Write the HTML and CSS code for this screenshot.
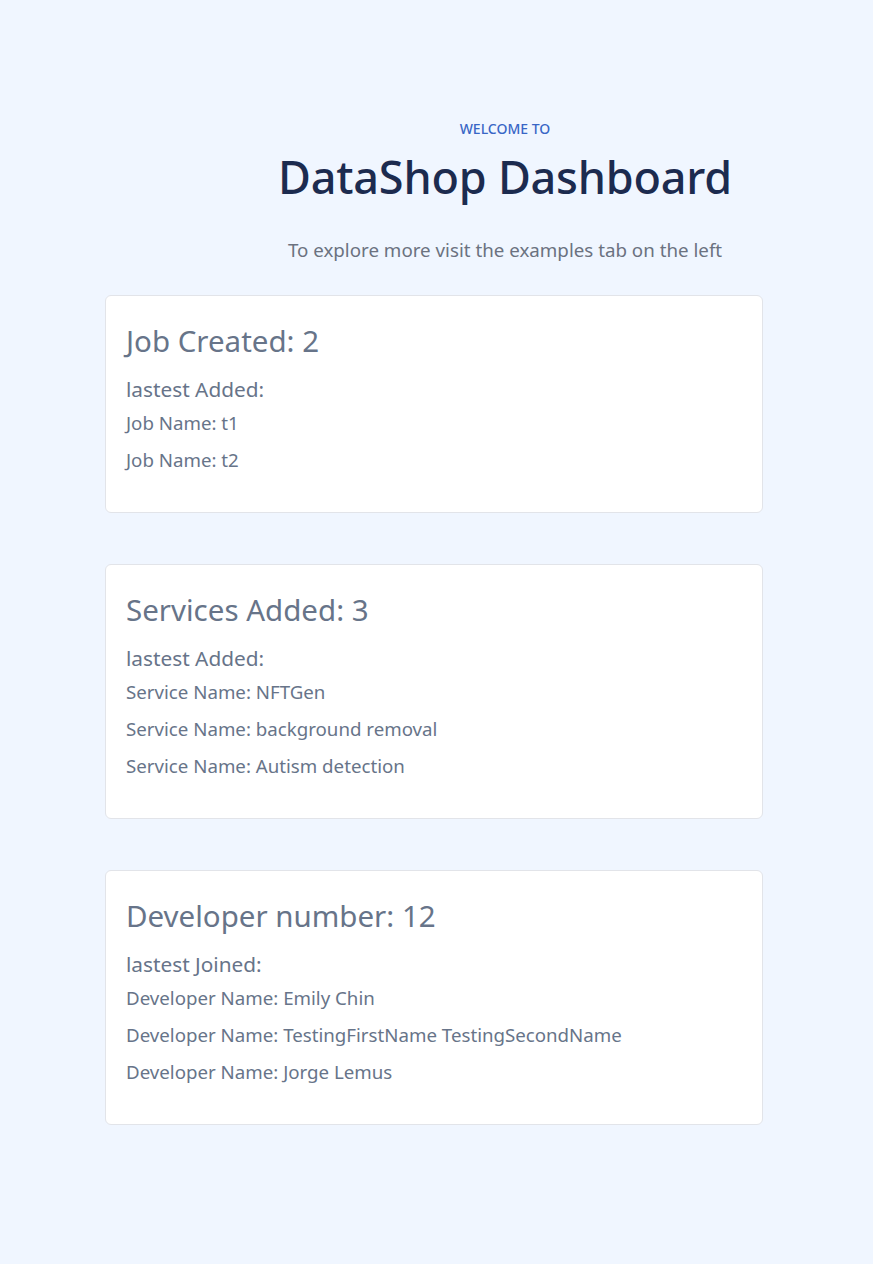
FILE: index.html
```html
<!DOCTYPE html>
<html lang="en">
<head>
<meta charset="utf-8">
<title>DataShop Dashboard</title>
<link rel="stylesheet" href="styles.css">
</head>
<body>
<header class="hero">
  <p class="eyebrow">Welcome to</p>
  <h1 class="hero-title">DataShop Dashboard</h1>
  <p class="hero-sub">To explore more visit the examples tab on the left</p>
</header>
<main class="cards">
  <section class="card">
    <h2 class="card-title">Job Created: 2</h2>
    <h3 class="card-sub">lastest Added:</h3>
    <ul class="card-list">
      <li>Job Name: t1</li>
      <li>Job Name: t2</li>
    </ul>
  </section>
  <section class="card">
    <h2 class="card-title">Services Added: 3</h2>
    <h3 class="card-sub">lastest Added:</h3>
    <ul class="card-list">
      <li>Service Name: NFTGen</li>
      <li>Service Name: background removal</li>
      <li>Service Name: Autism detection</li>
    </ul>
  </section>
  <section class="card">
    <h2 class="card-title">Developer number: 12</h2>
    <h3 class="card-sub">lastest Joined:</h3>
    <ul class="card-list">
      <li>Developer Name: Emily Chin</li>
      <li>Developer Name: TestingFirstName TestingSecondName</li>
      <li>Developer Name: Jorge Lemus</li>
    </ul>
  </section>
</main>
</body>
</html>
```

FILE: styles.css
```css
* { box-sizing: border-box; }
html, body { margin: 0; padding: 0; }
body {
  background: #f0f6ff;
  font-family: "Noto Sans", "Open Sans", sans-serif;
  color: #677489;
  min-height: 1264px;
}
.hero {
  padding: 119px 0 0 137px;
  text-align: center;
}
.eyebrow {
  margin: 0;
  font-size: 14px;
  line-height: 20px;
  font-weight: 500;
  text-transform: uppercase;
  color: #3866c6;
}
.hero-title {
  margin: 14px 0 0;
  font-size: 45px;
  line-height: 48px;
  font-weight: 500;
  letter-spacing: -0.2px;
  color: #1c2b4f;
}
.hero-sub {
  margin: 35px 0 0;
  font-size: 18.75px;
  line-height: 28px;
  color: #6b7280;
}
.cards {
  padding: 31px 0 0 105px;
  display: flex;
  flex-direction: column;
  gap: 51px;
}
.card {
  width: 658px;
  background: #ffffff;
  border: 1px solid #e2e4e9;
  border-radius: 6px;
  padding: 27px 20px 38px;
}
.card-title {
  margin: 0;
  font-size: 29.5px;
  line-height: 36px;
  font-weight: 400;
}
.card-sub {
  margin: 16px 0 0;
  font-size: 20.8px;
  line-height: 28px;
  font-weight: 400;
}
.card-list {
  list-style: none;
  margin: 6px 0 0;
  padding: 0;
  display: flex;
  flex-direction: column;
  gap: 9px;
  font-size: 18.7px;
  line-height: 28px;
}
```
